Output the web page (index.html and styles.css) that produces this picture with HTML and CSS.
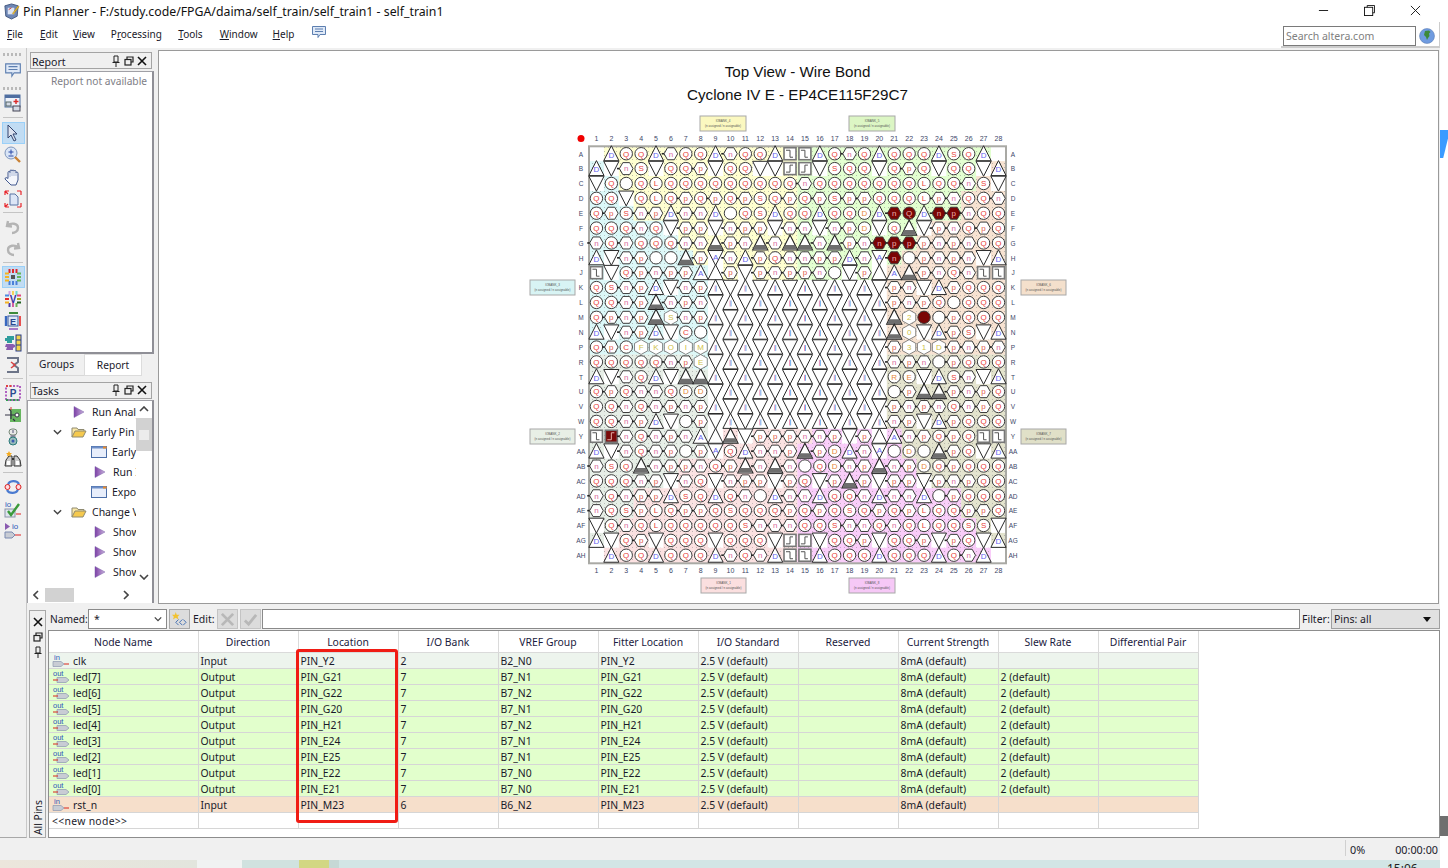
FILE: index.html
```html
<!DOCTYPE html>
<html lang="en">
<head>
<meta charset="utf-8">
<title>Pin Planner</title>
<link rel="stylesheet" href="styles.css">
</head>
<body>
<svg class="defs" width="0" height="0">
  <linearGradient id="purple" x1="0" y1="0" x2="1" y2="0"><stop offset="0" stop-color="#7c3fa6"/><stop offset="1" stop-color="#c9b3dc"/></linearGradient>
  <symbol id="play" viewBox="0 0 12 12"><path d="M1 .5 11 6 1 11.5Z" fill="url(#purple)" stroke="#7d62a8" stroke-width=".5"/></symbol>
  <symbol id="folder" viewBox="0 0 16 12"><path d="M1 11V2h5l1 1.5h6V5" fill="#fbe9a8" stroke="#8f8a70"/><path d="M1 11 4 5h11l-3 6Z" fill="#f5c94e" stroke="#8f8a70"/></symbol>
  <symbol id="win" viewBox="0 0 16 12"><rect x=".5" y=".5" width="15" height="11" fill="#e8eefb" stroke="#4b6ea8"/><rect x=".5" y=".5" width="15" height="2" fill="#6f8fc8"/><rect x="12" y=".5" width="3.5" height="2" fill="#e88a2a"/></symbol>
  <symbol id="chev" viewBox="0 0 10 6"><path d="M1 1l4 4 4-4" fill="none" stroke="#444" stroke-width="1.6"/></symbol>
  <symbol id="pin-in" viewBox="0 0 18 15"><path d="M1 8.5h8l3 2.5-3 2.5H1Z" fill="#c8ccd4" stroke="#8c98b0" stroke-width=".7"/><path d="M12 11h5" stroke="#d8261c"/></symbol>
  <symbol id="pin-out" viewBox="0 0 18 15"><path d="M5 8.500h9l3 2.500-3 2.500H5Z" fill="#c8ccd4" stroke="#8c98b0" stroke-width=".7"/><path d="M1 11h5" stroke="#d8261c"/></symbol>
  <symbol id="pin" viewBox="0 0 10 12"><path d="M3 1h4v6H3ZM1.500 7.500h7M5 8v4" fill="none" stroke="#222"/></symbol>
  <symbol id="restore" viewBox="0 0 10 10"><path d="M3 3V1h6v5H7" fill="none" stroke="#222" stroke-width="1.2"/><rect x="1" y="3.500" width="6" height="5.500" fill="none" stroke="#222" stroke-width="1.2"/></symbol>
  <symbol id="close" viewBox="0 0 10 10"><path d="M1 1l8 8M9 1 1 9" stroke="#111" stroke-width="1.6"/></symbol>
  <symbol id="bubble" viewBox="0 0 16 16"><path d="M1.500 2.500h13v8H9l-2 3v-3H1.500Z" fill="#dfe9f7" stroke="#5d7fb0"/><path d="M4 5h8M4 7.500h8" stroke="#5d7fb0"/></symbol>
</svg>

<div class="screen">
  <div class="app">
    <header class="titlebar">
      <svg class="app-ico" viewBox="0 0 18 18"><path d="M2 3 9 1l7 2-1 11-6 3-6-3Z" fill="#6d86b5" stroke="#44597f"/><path d="M5 5h7v7H5Z" fill="#dbe4f4"/><path d="M10 11 16 3l1 1-6 8Z" fill="#f2c230" stroke="#a47b16" stroke-width=".5"/><path d="M6 7l3-2" stroke="#c33"/></svg>
      <span class="title-text">Pin Planner - F:/study.code/FPGA/daima/self_train/self_train1 - self_train1</span>
      <div class="win-btns">
        <svg class="win-btn" viewBox="0 0 12 12"><path d="M1 6h10" stroke="#111"/></svg>
        <svg class="win-btn" viewBox="0 0 12 12"><path d="M3.500 2.500v-2h8v8h-2" fill="none" stroke="#111"/><rect x=".5" y="2.500" width="9" height="9" fill="none" stroke="#111"/></svg>
        <svg class="win-btn" viewBox="0 0 12 12"><path d="M1 1l10 10M11 1 1 11" stroke="#111"/></svg>
      </div>
    </header>

    <nav class="menubar">
      <span class="m-file"><u>F</u>ile</span>
      <span class="m-edit"><u>E</u>dit</span>
      <span class="m-view"><u>V</u>iew</span>
      <span class="m-proc">P<u>r</u>ocessing</span>
      <span class="m-tools"><u>T</u>ools</span>
      <span class="m-window"><u>W</u>indow</span>
      <span class="m-help"><u>H</u>elp</span>
      <svg class="m-bubble"><use href="#bubble"/></svg>
      <div class="searchgroup">
        <span class="search">Search altera.com</span>
        <svg class="globe" viewBox="0 0 16 16"><circle cx="8" cy="8" r="7.500" fill="#6f9be0" stroke="#5577aa" stroke-width=".5"/><path d="M6 3l4-.5 1.500 1.500-1.500 1.500.5 2.500-1.500 2-1 2-1-3-2-2 .5-2Z" fill="#3e8a3a"/></svg>
      </div>
    </nav>

    <div class="main">
      <aside class="toolbar">
        <i class="grip g1"></i>
        <div class="tb"><svg class="tb-i" viewBox="0 0 18 18"><use href="#bubble" width="18" height="18"/></svg></div>
        <i class="grip g2"></i>
        <div class="tb"><svg class="tb-i" viewBox="0 0 18 18"><rect x="1" y="1" width="15" height="12" fill="#eef2fa" stroke="#4f6ea0"/><rect x="1" y="1" width="15" height="3" fill="#4f6ea0"/><path d="M12 5v5M9.500 7.500h5" stroke="#d92a2a" stroke-width="1.400"/><rect x="2" y="8" width="5" height="4" fill="#d4dae6" stroke="#566"/><rect x="9" y="12" width="7" height="5" fill="#d4dae6" stroke="#445"/></svg></div>
        <i class="sep s1"></i>
        <div class="tb on"><svg class="tb-i" viewBox="0 0 18 18"><path d="M4 1v13l3-3 3 6 2-1-3-6h4Z" fill="#dde3ef" stroke="#33456f"/></svg></div>
        <div class="tb"><svg class="tb-i" viewBox="0 0 18 18"><circle cx="7" cy="7" r="6" fill="#d9e5f6" stroke="#7f96bb"/><path d="M7 3.500v5M4.500 6h5M4.500 10h5" stroke="#2848a8"/><path d="M11 11l5 5" stroke="#c98236" stroke-width="2.400"/></svg></div>
        <div class="tb"><svg class="tb-i" viewBox="0 0 18 18"><path d="M4 9V4.500a1 1 0 0 1 2 0V3a1 1 0 0 1 2 0v0a1 1 0 0 1 2 .2 1 1 0 0 1 2 .6V5a1 1 0 0 1 2 .4V12l-2 5H7L1 11c0-1.500 1.500-2 3-.5Z" fill="#f4f6fb" stroke="#42598f"/><path d="M6 4v5M8 3v5M10 3.500V8M12 4v4" stroke="#8ea2c8" stroke-width=".7"/></svg></div>
        <div class="tb"><svg class="tb-i" viewBox="0 0 18 18"><path d="M6 4h5l3 3v8H6Z" fill="#dde6f6" stroke="#5a74a4"/><path d="M1 1h4M1 1v4M1 1l3 3M17 1h-4M17 1v4M1 17h4M1 17v-4M1 17l3-3M17 17h-4M17 17v-4" stroke="#e8252b" fill="none" stroke-width="1.200"/></svg></div>
        <i class="sep"></i>
        <div class="tb"><svg class="tb-i" viewBox="0 0 18 18"><path d="M4 3 3 8l5 .5M3.500 7.500C7 4.500 14 5 14 10c0 3-3 5-6 5" fill="none" stroke="#b4b4b4" stroke-width="2.400"/></svg></div>
        <div class="tb"><svg class="tb-i" viewBox="0 0 18 18"><path d="M14 3l1 5-5 .5M14.500 7.500C11 4.500 4 5 4 10c0 3 3 5 6 5" fill="none" stroke="#b4b4b4" stroke-width="2.400"/></svg></div>
        <i class="sep"></i>
        <div class="tb on"><svg class="tb-i" viewBox="0 0 18 18"><rect x="7" y="7" width="4" height="4" fill="#555"/><path d="M5.500 1v4M9 1v4M12.500 1v4" stroke="#e0282c" stroke-width="2"/><path d="M5.500 13v4M9 13v4M12.500 13v4" stroke="#4a80d8" stroke-width="2"/><path d="M1 5.500h4M1 9h4M1 12.500h4" stroke="#f4b324" stroke-width="2"/><path d="M13 5.500h4M13 9h4M13 12.500h4" stroke="#66b45a" stroke-width="2"/></svg></div>
        <div class="tb"><svg class="tb-i" viewBox="0 0 18 18"><path d="M5.500 1v4" stroke="#d49fe0" stroke-width="2"/><path d="M9 1v4" stroke="#f4d15a" stroke-width="2"/><path d="M12.500 1v4" stroke="#70d8d0" stroke-width="2"/><path d="M5.500 13v4" stroke="#4a3aa8" stroke-width="2"/><path d="M9 13v4" stroke="#d060a0" stroke-width="2"/><path d="M12.500 13v4" stroke="#6ab45a" stroke-width="2"/><path d="M1 5.500h4" stroke="#4a88e0" stroke-width="2"/><path d="M1 9h4" stroke="#e0282c" stroke-width="2"/><path d="M1 12.500h4" stroke="#f4b324" stroke-width="2"/><path d="M13 5.500h4" stroke="#e04880" stroke-width="2"/><path d="M13 9h4" stroke="#a0a020" stroke-width="2"/><path d="M13 12.500h4" stroke="#206020" stroke-width="2"/><text x="9" y="13" class="tb-t v">V</text></svg></div>
        <div class="tb"><svg class="tb-i" viewBox="0 0 18 18"><path d="M5 1h9" stroke="#3c8a3c" stroke-width="2"/><path d="M5 17h9" stroke="#a878c8" stroke-width="2"/><path d="M2 4v10" stroke="#3868c0" stroke-width="2.400"/><path d="M16 4v10" stroke="#e85050" stroke-width="2"/><rect x="4" y="4" width="10" height="10" fill="#dde6f6" stroke="#3a5a9a"/><text x="9" y="12.500" class="tb-t e">E</text></svg></div>
        <div class="tb"><svg class="tb-i" viewBox="0 0 18 18"><rect x="12" y="1" width="5" height="16" fill="#f2d34c" stroke="#243a8a"/><path d="M12 6h5M12 11h5" stroke="#243a8a"/><path d="M3 2h7v4H8v3H3V7H1V4h2Z" fill="#2f9d9d"/><path d="M2 10h7l2 1v2l-2 1v2H2l1-3H1Z" fill="#8a5bb0"/></svg></div>
        <div class="tb"><svg class="tb-i" viewBox="0 0 18 18"><path d="M3 2h11v4l-4 3 4 3v4H3" fill="none" stroke="#6c7488" stroke-width="2"/><path d="M7 6l4 3-4 3" fill="none" stroke="#d94040" stroke-width="1.500"/></svg></div>
        <i class="sep"></i>
        <div class="tb"><svg class="tb-i" viewBox="0 0 18 18"><path d="M2 2h14v14H2Z" fill="none" stroke="#b060c0" stroke-width="2" stroke-dasharray="2 1.500"/><path d="M2 2h7" stroke="#e04040" stroke-width="2" stroke-dasharray="2 1.500"/><path d="M2 16h14" stroke="#30a050" stroke-width="2" stroke-dasharray="2 1.500"/><text x="9" y="13" class="tb-t p">P</text></svg></div>
        <div class="tb"><svg class="tb-i" viewBox="0 0 18 18"><rect x="6" y="3" width="11" height="13" fill="#67b65f"/><path d="M1 9h13M7 5v8M5 3l2 2M9 13l2 2" stroke="#334" stroke-width="1.200" fill="none"/><path d="M7 1v3" stroke="#d33"/><circle cx="13" cy="9" r="2" fill="#fff" stroke="#334"/></svg></div>
        <div class="tb"><svg class="tb-i" viewBox="0 0 18 18"><rect x="5" y="1" width="8" height="6" rx="3" fill="#e8e8e8" stroke="#7a8a7a"/><path d="M9 2v3" stroke="#557"/><rect x="6.500" y="7" width="5" height="2" fill="#889"/><circle cx="9" cy="13" r="4" fill="#9bb" stroke="#2a7a7a"/><circle cx="9" cy="13" r="1.500" fill="#3a5ab0"/></svg></div>
        <div class="tb"><svg class="tb-i" viewBox="0 0 18 18"><path d="M2 10l3-4h3v10H1ZM16 10l-3-4h-3v10h7Z" fill="#ccc" stroke="#333"/><path d="M8 9h2" stroke="#333" stroke-width="2"/><path d="M5 1l1 2 2 0-1.500 1.500L7 6.500 5 5.500 3 6.500l.5-2L2 3h2Z" fill="#f3a91c"/><path d="M3 11h3v4H3ZM12 11h3v4h-3Z" fill="#fff"/></svg></div>
        <i class="sep"></i>
        <div class="tb"><svg class="tb-i" viewBox="0 0 18 18"><path d="M4 7c1-5 9-5 11-1M14 11c-1 5-9 5-11 1" fill="none" stroke="#4a7ad0" stroke-width="2.200"/><circle cx="3.500" cy="9" r="2.500" fill="#ffdce0" stroke="#d22"/><circle cx="14.500" cy="9" r="2.500" fill="#ffdce0" stroke="#d22"/></svg></div>
        <div class="tb"><svg class="tb-i" viewBox="0 0 18 18"><text x="1" y="7" class="tb-t io">io</text><rect x="1" y="9" width="10" height="8" fill="#dfe4ee" stroke="#8a94a8"/><path d="M4 11l3 4 8-11" fill="none" stroke="#3a9a3a" stroke-width="2.400"/><path d="M12 14h5" stroke="#d22"/></svg></div>
        <div class="tb"><svg class="tb-i" viewBox="0 0 18 18"><path d="M1 1l5 3.500L1 8Z" fill="#8a5bb0"/><text x="8" y="7" class="tb-t io">io</text><path d="M1 10h7l3 3-3 3H1Z" fill="#c8ccd4" stroke="#7a8ab0"/><path d="M11 13h6" stroke="#d22"/></svg></div>
      </aside>

      <div class="content">
        <div class="upper">
          <div class="dock">
            <div class="pane-head report-head"><span>Report</span><span class="head-btns"><svg class="hb"><use href="#pin"/></svg><svg class="hb"><use href="#restore"/></svg><svg class="hb"><use href="#close"/></svg></span></div>
            <div class="report-body">Report not available</div>
            <div class="tabs"><span class="tab">Groups</span><span class="tab active">Report</span></div>
            <div class="pane-head tasks-head"><span>Tasks</span><span class="head-btns"><svg class="hb"><use href="#pin"/></svg><svg class="hb"><use href="#restore"/></svg><svg class="hb"><use href="#close"/></svg></span></div>
            <div class="tasks-body">
              <div class="tree-wrap">
                <div class="tree">
                  <div class="row l1"><svg class="i-play"><use href="#play"/></svg><span>Run Analysis &amp; Synthesis</span></div>
                  <div class="row l0"><svg class="i-chev"><use href="#chev"/></svg><svg class="i-folder"><use href="#folder"/></svg><span>Early Pin Planning</span></div>
                  <div class="row l2"><svg class="i-win"><use href="#win"/></svg><span>Early Pin Planner</span></div>
                  <div class="row l3"><svg class="i-play"><use href="#play"/></svg><span>Run I/O Assignment Analysis</span></div>
                  <div class="row l2"><svg class="i-win"><use href="#win"/></svg><span>Export Pin Assignments</span></div>
                  <div class="row l0"><svg class="i-chev"><use href="#chev"/></svg><svg class="i-folder"><use href="#folder"/></svg><span>Change View</span></div>
                  <div class="row l3"><svg class="i-play"><use href="#play"/></svg><span>Show Package Top</span></div>
                  <div class="row l3"><svg class="i-play"><use href="#play"/></svg><span>Show Package Bottom</span></div>
                  <div class="row l3"><svg class="i-play"><use href="#play"/></svg><span>Show Pad View</span></div>
                  <div class="row l0"><svg class="i-chev"><use href="#chev"/></svg><svg class="i-folder"><use href="#folder"/></svg><span>Highlight Pins</span></div>
                </div>
                <div class="vbar">
                  <svg class="arrow up" viewBox="0 0 10 6"><path d="M1 5l4-4 4 4" fill="none" stroke="#444" stroke-width="1.600"/></svg>
                  <div class="vthumb"><i></i></div>
                  <svg class="arrow down" viewBox="0 0 10 6"><path d="M1 1l4 4 4-4" fill="none" stroke="#444" stroke-width="1.600"/></svg>
                </div>
              </div>
              <div class="hbar">
                <svg class="arrow-h" viewBox="0 0 6 10"><path d="M5 1 1 5l4 4" fill="none" stroke="#444" stroke-width="1.600"/></svg>
                <div class="hthumb"></div>
                <svg class="arrow-h right" viewBox="0 0 6 10"><path d="M1 1l4 4-4 4" fill="none" stroke="#444" stroke-width="1.600"/></svg>
              </div>
            </div>
          </div>

          <section class="canvas">
            <div class="canvas-title">Top View - Wire Bond</div>
            <div class="canvas-title">Cyclone IV E - EP4CE115F29C7</div>
            <svg id="pkg" class="pkg" viewBox="525 115 545 480"></svg>
          </section>
        </div>

        <div class="lower">
          <div class="strip">
            <svg class="sb"><use href="#close"/></svg>
            <svg class="sb"><use href="#restore"/></svg>
            <svg class="sb"><use href="#pin"/></svg>
            <span class="strip-label">All Pins</span>
          </div>
          <div class="editor">
            <div class="controls">
              <span class="lb named">Named:</span>
              <div class="field name-field"><span>*</span><svg class="combo-chev"><use href="#chev"/></svg></div>
              <div class="btn"><svg class="btn-i" viewBox="0 0 18 16"><path d="M5 0l1 3 3 0-2 2 1 3-3-2-3 2 1-3-2-2 3 0Z" fill="#f2c230"/><path d="M8 8l-3 3 3 3M12 8l-3 3 3 3M13 8l3 3-3 3" fill="none" stroke="#3e6cb0"/></svg></div>
              <span class="lb edit">Edit:</span>
              <div class="btn dis"><svg class="btn-i" viewBox="0 0 18 16"><path d="M3 2l12 12M15 2 3 14" stroke="#b8b8b8" stroke-width="3"/></svg></div>
              <div class="btn dis"><svg class="btn-i" viewBox="0 0 18 16"><path d="M3 9l4 4 8-10" fill="none" stroke="#b8b8b8" stroke-width="3"/></svg></div>
              <div class="field value-field"></div>
              <span class="lb filter">Filter:</span>
              <div class="select"><span>Pins: all</span><i class="tri"></i></div>
            </div>
            <div class="table-panel">
              <table class="pins">
                <colgroup><col class="c-name"><col class="c-w"><col class="c-w"><col class="c-w"><col class="c-w"><col class="c-w"><col class="c-w"><col class="c-w"><col class="c-w"><col class="c-w"><col class="c-w"></colgroup>
                <thead><tr><th>Node Name</th><th>Direction</th><th>Location</th><th>I/O Bank</th><th>VREF Group</th><th>Fitter Location</th><th>I/O Standard</th><th>Reserved</th><th>Current Strength</th><th>Slew Rate</th><th>Differential Pair</th></tr></thead>
                <tbody>
                  <tr class="r-clk"><td class="nm"><svg class="pinico" viewBox="0 0 18 15"><text x="2" y="6.500" class="io-t">in</text><use href="#pin-in"/></svg>clk</td><td>Input</td><td>PIN_Y2</td><td>2</td><td>B2_N0</td><td>PIN_Y2</td><td>2.5 V (default)</td><td></td><td>8mA (default)</td><td></td><td></td></tr>
                  <tr class="r-led"><td class="nm"><svg class="pinico" viewBox="0 0 18 15"><text x="1" y="6.500" class="io-t">out</text><use href="#pin-out"/></svg>led[7]</td><td>Output</td><td>PIN_G21</td><td>7</td><td>B7_N1</td><td>PIN_G21</td><td>2.5 V (default)</td><td></td><td>8mA (default)</td><td>2 (default)</td><td></td></tr>
                  <tr class="r-led"><td class="nm"><svg class="pinico" viewBox="0 0 18 15"><text x="1" y="6.500" class="io-t">out</text><use href="#pin-out"/></svg>led[6]</td><td>Output</td><td>PIN_G22</td><td>7</td><td>B7_N2</td><td>PIN_G22</td><td>2.5 V (default)</td><td></td><td>8mA (default)</td><td>2 (default)</td><td></td></tr>
                  <tr class="r-led"><td class="nm"><svg class="pinico" viewBox="0 0 18 15"><text x="1" y="6.500" class="io-t">out</text><use href="#pin-out"/></svg>led[5]</td><td>Output</td><td>PIN_G20</td><td>7</td><td>B7_N1</td><td>PIN_G20</td><td>2.5 V (default)</td><td></td><td>8mA (default)</td><td>2 (default)</td><td></td></tr>
                  <tr class="r-led"><td class="nm"><svg class="pinico" viewBox="0 0 18 15"><text x="1" y="6.500" class="io-t">out</text><use href="#pin-out"/></svg>led[4]</td><td>Output</td><td>PIN_H21</td><td>7</td><td>B7_N2</td><td>PIN_H21</td><td>2.5 V (default)</td><td></td><td>8mA (default)</td><td>2 (default)</td><td></td></tr>
                  <tr class="r-led"><td class="nm"><svg class="pinico" viewBox="0 0 18 15"><text x="1" y="6.500" class="io-t">out</text><use href="#pin-out"/></svg>led[3]</td><td>Output</td><td>PIN_E24</td><td>7</td><td>B7_N1</td><td>PIN_E24</td><td>2.5 V (default)</td><td></td><td>8mA (default)</td><td>2 (default)</td><td></td></tr>
                  <tr class="r-led"><td class="nm"><svg class="pinico" viewBox="0 0 18 15"><text x="1" y="6.500" class="io-t">out</text><use href="#pin-out"/></svg>led[2]</td><td>Output</td><td>PIN_E25</td><td>7</td><td>B7_N1</td><td>PIN_E25</td><td>2.5 V (default)</td><td></td><td>8mA (default)</td><td>2 (default)</td><td></td></tr>
                  <tr class="r-led"><td class="nm"><svg class="pinico" viewBox="0 0 18 15"><text x="1" y="6.500" class="io-t">out</text><use href="#pin-out"/></svg>led[1]</td><td>Output</td><td>PIN_E22</td><td>7</td><td>B7_N0</td><td>PIN_E22</td><td>2.5 V (default)</td><td></td><td>8mA (default)</td><td>2 (default)</td><td></td></tr>
                  <tr class="r-led"><td class="nm"><svg class="pinico" viewBox="0 0 18 15"><text x="1" y="6.500" class="io-t">out</text><use href="#pin-out"/></svg>led[0]</td><td>Output</td><td>PIN_E21</td><td>7</td><td>B7_N0</td><td>PIN_E21</td><td>2.5 V (default)</td><td></td><td>8mA (default)</td><td>2 (default)</td><td></td></tr>
                  <tr class="r-rst"><td class="nm"><svg class="pinico" viewBox="0 0 18 15"><text x="2" y="6.500" class="io-t">in</text><use href="#pin-in"/></svg>rst_n</td><td>Input</td><td>PIN_M23</td><td>6</td><td>B6_N2</td><td>PIN_M23</td><td>2.5 V (default)</td><td></td><td>8mA (default)</td><td></td><td></td></tr>
                  <tr class="r-new"><td class="nw">&lt;&lt;new node&gt;&gt;</td><td></td><td></td><td></td><td></td><td></td><td></td><td></td><td></td><td></td><td></td></tr>
                </tbody>
              </table>
              <div class="callout"></div>
            </div>
          </div>
        </div>
      </div>
    </div>

    <footer class="status">
      <span class="pct">0%</span>
      <span class="elapsed">00:00:00</span>
    </footer>
  </div>
  <div class="edge"><i class="edge-blue"></i><i class="edge-grey"></i></div>
</div>
<div class="desktop">
  <i class="d1"></i><i class="d2"></i><i class="d3"></i><i class="d4"></i><i class="d5"></i><i class="d6"></i>
  <span class="clock">15:06</span>
</div>
<script src="pins.js"></script>
</body>
</html>
```

FILE: styles.css
```css
* { box-sizing: border-box; }
html, body { margin: 0; padding: 0; width: 1448px; height: 868px; overflow: hidden; background: #fff; }
body { font-family: "Noto Sans", "Liberation Sans", sans-serif; font-size: 10.5px; color: #1a1a2a; }
.defs { position: absolute; }
.io-t { font: 7.5px "Liberation Sans", sans-serif; fill: #2c55b8; }

.screen { display: flex; height: 860px; }
.app { width: 1440px; display: flex; flex-direction: column; background: #f0f0f0; }
.edge { width: 8px; background: #fff; display: flex; flex-direction: column; }
.edge-blue { display: block; margin-top: 130px; height: 28px; background: #3b9bff; clip-path: polygon(0 0,100% 0,100% 30%,40% 100%,0 100%); }
.edge-grey { display: block; margin-top: 658px; height: 20px; background: #6f6f6f; }

.titlebar { height: 22px; background: #fff; display: flex; align-items: center; padding-left: 3px; }
.app-ico { width: 17px; height: 17px; margin-right: 3px; }
.title-text { font-size: 12.3px; color: #111; white-space: nowrap; }
.win-btns { margin-left: auto; display: flex; gap: 35px; margin-right: 19px; margin-top: -2px; }
.win-btn { width: 11px; height: 11px; }

.menubar { height: 26px; background: #fff; display: flex; align-items: center; padding-left: 7px; padding-bottom: 3px; font-size: 10px; }
.menubar u { text-decoration: underline; }
.m-edit { margin-left: 17px; }
.m-view { margin-left: 15px; }
.m-proc { margin-left: 16px; }
.m-tools { margin-left: 16.5px; }
.m-window { margin-left: 17px; }
.m-help { margin-left: 15px; }
.m-bubble { width: 16px; height: 16px; margin-left: 17px; margin-top: -3px; }
.searchgroup { margin-left: auto; align-self: flex-start; margin-bottom: -3px; display: flex; align-items: center; width: 159px; height: 26px; padding: 3px 0 0 2px; background: #fff; border-right: 1px solid #ccc; border-bottom: 2px solid #ccc; }
.search { width: 133px; height: 20px; background: #fff; border: 1px solid #7a7a7a; padding-left: 2px; color: #808080; line-height: 18px; font-size: 10.5px; white-space: nowrap; }
.globe { width: 16px; height: 16px; margin-left: 3px; }

.main { flex: none; height: 790px; display: flex; }
.toolbar { width: 27px; border-right: 1px solid #c8c8c8; border-bottom: 1px solid #a8a8a8; display: flex; flex-direction: column; align-items: center; }
.grip { display: block; width: 20px; height: 3px; background: repeating-linear-gradient(90deg, #b9b9b9 0 2px, transparent 2px 4px); }
.g1 { margin-top: 5px; margin-bottom: 3px; }
.g2 { margin-top: 6px; margin-bottom: 2px; }
.sep { display: block; width: 20px; height: 1px; background: #c4c4c4; margin: 2px 0 3px; flex: none; }
.s1 { margin: 3px 0 4px; }
.tb { flex: none; width: 23px; height: 22px; display: flex; align-items: center; justify-content: center; }
.tb.on { background: #c1dcf3; border: 1px solid #9ad0f8; }
.tb-i { width: 18px; height: 18px; }
.tb-t { font-family: "Liberation Sans", sans-serif; font-weight: 700; text-anchor: middle; }
.tb-t.v { font-size: 10px; fill: #3330a0; }
.tb-t.e { font-size: 9px; fill: #2a4a90; }
.tb-t.p { font-size: 10px; fill: #2a4a90; }
.tb-t.io { font-size: 8px; fill: #2c55b8; font-weight: 400; text-anchor: start; }

.content { flex: 1; display: flex; flex-direction: column; min-width: 0; }
.upper { height: 556px; display: flex; }
.dock { width: 127px; display: flex; flex-direction: column; }
.pane-head { margin: 4px 2px 2px 3px; height: 17px; border: 1px solid #a4a4a4; display: flex; align-items: center; padding-left: 1px; padding-top: 1px; font-size: 10.6px; }
.report-head { padding-top: 2px; }
.tasks-head { margin: 6px 2px 1px 3px; }
.head-btns { margin-left: auto; display: flex; gap: 3px; padding-right: 4px; margin-top: -2px; }
.hb { width: 10px; height: 12px; }
.report-body { height: 283px; background: #fff; border-style: solid; border-width: 1px 2px 2px 1px; border-color: #a0a0a6 #8f8f96 #8f8f96 #a0a0a6; padding: 2px 5px 0 0; text-align: right; color: #7e7e86; font-size: 10.2px; }
.tabs { height: 22px; display: flex; align-items: stretch; padding-left: 2px; font-size: 10.2px; }
.tab { width: 55px; text-align: center; line-height: 20px; border-bottom: 1px solid #d8d8d8; }
.tab.active { background: #fff; border: 1px solid #dcdcdc; width: 58px; line-height: 21px; }

.tasks-body { height: 203px; background: #fff; border: 1px solid #a0a0a6; border-right: 2px solid #8f8f96; border-bottom: 0; display: flex; flex-direction: column; }
.tree-wrap { flex: 1; display: flex; min-height: 0; }
.tree { width: 109px; overflow: hidden; padding-top: 1px; }
.row { height: 20px; display: flex; align-items: center; white-space: nowrap; font-size: 10.5px; flex: none; }
.l1 { padding-left: 45px; }
.l0 { padding-left: 25px; }
.l2 { padding-left: 63px; }
.l3 { padding-left: 66px; }
.i-play { width: 12px; height: 12px; margin-right: 7px; flex: none; }
.i-chev { width: 9px; height: 6px; margin-right: 9px; flex: none; }
.i-folder { width: 16px; height: 12px; margin-right: 5px; flex: none; }
.i-win { width: 16px; height: 12px; margin-right: 5px; flex: none; }
.vbar { width: 16px; display: flex; flex-direction: column; align-items: center; background: #fff; padding-top: 5px; }
.arrow { width: 10px; height: 6px; flex: none; }
.arrow.down { margin-top: auto; margin-bottom: 7px; }
.vthumb { width: 16px; height: 33px; margin-top: 6px; background: #d2d2d2; display: flex; align-items: center; justify-content: center; }
.vthumb i { display: block; width: 10px; height: 10px; background: #ececec; }
.hbar { height: 16px; display: flex; align-items: center; background: #fff; padding: 0 0 0 5px; flex: none; }
.arrow-h { width: 6px; height: 10px; flex: none; }
.hthumb { width: 29px; height: 14px; margin-left: 6px; background: #d2d2d2; }
.arrow-h.right { margin-left: 49px; }

.canvas { width: 1281px; margin: 2px 0 0 4px; background: #fff; border: 1px solid #9a9a9a; display: flex; flex-direction: column; align-items: center; padding-top: 9px; height: 554px; }
.canvas-title { height: 23px; line-height: 23px; font-family: "Liberation Sans", sans-serif; font-size: 15.2px; color: #111; white-space: nowrap; margin-left: -2px; }
.pkg { width: 545px; height: 480px; margin: 8px 0 0 -2px; flex: none; }

.lower { margin: 4px 0 0 2px; height: 230px; display: flex; }
.strip { width: 17px; height: 228px; margin-top: 2px; border: 1px solid #a8a8a8; background: #f0f0f0; display: flex; flex-direction: column; align-items: center; padding-top: 5px; gap: 3px; }
.sb { width: 10px; height: 12px; flex: none; }
.strip-label { margin-top: auto; margin-bottom: 2px; writing-mode: vertical-rl; transform: rotate(180deg); font-size: 10.4px; line-height: 14px; }

.editor { margin-left: 2px; width: 1392px; display: flex; flex-direction: column; }
.controls { height: 22px; display: flex; align-items: center; flex: none; }
.lb { white-space: nowrap; }
.named { margin-left: 2px; width: 38px; font-size: 10.2px; }
.field { background: #fff; border: 1px solid #8a8a8a; height: 20px; }
.name-field { width: 79px; display: flex; align-items: center; padding-left: 5px; justify-content: space-between; }
.combo-chev { width: 8px; height: 6px; margin-right: 4px; }
.btn { height: 20px; width: 21px; background: #dcdcdc; border: 1px solid #a8a8a8; display: flex; align-items: center; justify-content: center; flex: none; }
.btn.dis { background: #dcdcdc; border-color: #c4c4c4; }
.controls .btn { margin-left: 2px; }
.btn-i { width: 17px; height: 15px; }
.edit { margin-left: 3px; width: 22px; }
.value-field { width: 1038px; margin-left: 1px; }
.filter { margin-left: 2px; width: 29px; }
.select { width: 109px; height: 20px; background: #e1e1e1; border: 1px solid #a0a0a0; display: flex; align-items: center; padding-left: 2px; justify-content: space-between; }
.tri { width: 0; height: 0; border: 4px solid transparent; border-top: 5px solid #111; border-bottom: 0; margin-right: 8px; }

.table-panel { position: relative; height: 208px; background: #fff; border: 1px solid #8d8d8d; }
.pins { border-collapse: collapse; table-layout: fixed; width: 1149px; font-size: 10.4px; }
.c-name { width: 149px; }
.c-w { width: 100px; }
.pins th { height: 21px; font-weight: 400; border-right: 1px solid #dadada; border-bottom: 1px solid #dadada; padding: 2px 0 0; text-align: center; color: #1a1a40; white-space: nowrap; }
.pins td { height: 16px; padding: 1px 0 0 2px; border-right: 1px solid #d6d6d6; border-bottom: 1px solid #d6d6d6; white-space: nowrap; line-height: 14px; overflow: hidden; }
.r-clk td { background: #edf4ed; }
.r-led td { background: #e2ffcc; }
.r-rst td { background: #f6dfcb; }
.r-new td { background: #fff; }
.pins td.nm { padding-left: 3px; }
.pinico { width: 18px; height: 15px; vertical-align: top; margin: -1px 3px 0 0; overflow: visible; }
.pins td.nw { letter-spacing: .3px; padding-left: 3px; }
.callout { position: absolute; left: 247px; top: 18px; width: 102px; height: 174px; border: 3px solid #f01c14; border-radius: 3px; pointer-events: none; }

.status { height: 22px; flex: none; display: flex; align-items: center; position: relative; font-size: 10.8px; }
.pct { margin-left: 1350px; }
.elapsed { margin-left: 30px; white-space: nowrap; }
.status::before { content: ""; position: absolute; left: 1345px; top: 2px; height: 16px; width: 1px; background: #d0d0d0; }

.desktop { height: 8px; display: flex; position: relative; overflow: hidden; }
.desktop i { display: block; height: 8px; }
.d1 { width: 197px; background: linear-gradient(90deg, #ece6dc, #e2e5dd); }
.d2 { width: 45px; background: #f0f3f2; }
.d3 { width: 57px; background: #d0e2df; }
.d4 { width: 30px; background: #d2d783; }
.d5 { width: 10px; background: #c6d8d5; }
.d6 { width: 1101px; background: #d2e5e5; }
.clock { position: absolute; left: 1387px; top: 2px; font-size: 12px; line-height: 14px; color: #222; }
```

FILE: pins.js
```js
(function () {
  var rows = ['A','B','C','D','E','F','G','H','J','K','L','M','N','P','R','T','U','V','W','Y','AA','AB','AC','AD','AE','AF','AG','AH'];
  var M = 'IvIvIvIvIvIv', W = 'vIvIvIvIvIvI';
  var pins = [
    '_^QQ^nQQ^nQQ^[[^QnQ^QQQ^SQ^_',
    '^vnSvQQpvQQvv]]vSQQvQpQvQQv^',
    'vQoQLQQQQQQQQQnQQQQQQQLQQnSv',
    'QQvQLQpQpQpSQpQpSppQQQLpnQQn',
    'QpSnp^nn^oQS^QQ^QQD^NR^NPnQQ',
    'QQQnQvppvnppvnnvnpDvQ#vpnQpQ',
    'nQnQQQnn#pn#n##n#pnNPPpnpnQQ',
    '^vnpoo#pan^pQnnpp^naNopnpnv^',
    '[vQpnppAupvpnppnovpuA#pnQn[[',
    'QSnp^vnp' + M + 'pnv^pQQQ',
    'QQnp#npn' + W + 'pnpQoQQQ',
    'Qpnp#snp' + M + '#2@opQQQ',
    '^vnp^vCo' + W + '#0v^pSv^',
    'QpCfkghm' + M + 'p31dpnpn',
    'QQQQQnpe' + W + 'npnopQQQ',
    '^vnQ^v##' + M + '()v^Snv^',
    'QpQnnQDD' + W + 'op##pnpQ',
    'QQnQnpnp' + M + 'pnpnQnpQ',
    'QQnp^vop' + W + 'npv^pQQQ',
    '[ZnQnpnAu#vpppnnpvpuAnpQpQ[[',
    '^vnQnpopaQ^nnp#pD^naoDo#pQv^',
    'nSQ#nppnQp#n#noQDnp#npDQpQQQ',
    'QQQnpvnQvnppvpQvp#pvppvpnpQQ',
    'nQnpp^SQ^Qno^nn^QQn^nn^opQQQ',
    'nQSpLQppQSQQQpQpQSQpQpLQQppQ',
    'vQnQLQQQQQSnnnQQSnnQnQLQQSSv',
    '^vQpvQQQvQQQv]]vQQpvQQpvpQv^',
    '_^QQ^QQQ^nQn^[[^QQQ^QQQ^Qn^_'
  ];
  var banks = [
    'w1y13g13w1','c2y12g13o1','c2y12g12o2','c3y11g11o3','c3y11g11o3','c6y8g9o5','c6y8g8o6','c7y7g7o7','c8y6g6o8',
    'c8w12o8','c8w12o8','c8w12o8','c8w12o8','c8w12o8','e7c1w12k8','e8w12k8','e8w12k8','e8w12k8','e8w12k8',
    'e8i7m6k7','e8i6m7k7','e6i8m8k6','e6i8m9k5','e3i11m11k3','e3i11m11k3','e2i12m12k2','e1i13m13k1','w1i13m13w1'
  ];
  var colors = { w: '#ffffff', y: '#ffffcf', g: '#e2ffcf', o: '#f7e2d1', c: '#dcf8f8', e: '#e6eee6', i: '#fbe1e1', m: '#f9ccf9', k: '#e3e3cd' };
  var P = 14.89, Q = 14.87, X0 = 589, Y0 = 147.3;
  var yellow = { s: 'S', f: 'F', k: 'K', g: 'O', h: 'I', m: 'M', e: 'E', d: 'D', '0': '0', '1': '1', '2': '2', '3': '3' };

  function cx(c) { return +(X0 + P * c + P / 2).toFixed(2); }
  function cy(r) { return +(Y0 + Q * r + Q / 2).toFixed(2); }
  function t(x, y, s, f, sz) {
    return '<text x="' + x + '" y="' + (y + 2.8) + '" font-size="' + (sz || 8) + '" fill="' + f + '" text-anchor="middle" font-family="Liberation Sans, sans-serif">' + s + '</text>';
  }
  function circle(x, y, fill) {
    return '<circle cx="' + x + '" cy="' + y + '" r="6.2" fill="' + (fill || '#fff') + '" stroke="#3c3c3c" stroke-width="1"/>';
  }
  function hex(x, y, fill) {
    var p = [[-6.8,0],[-3.4,-6],[3.4,-6],[6.8,0],[3.4,6],[-3.4,6]].map(function (a) { return (x + a[0]) + ',' + (y + a[1]); }).join(' ');
    return '<path d="M' + (x - 9.2) + ' ' + y + 'h3" stroke="#222" stroke-width="1.6"/><polygon points="' + p + '" fill="' + (fill || '#fff') + '" stroke="#3c3c3c" stroke-width="1"/>';
  }
  function dia(x, y) {
    var p = [[0,-7.4],[6.6,-3.7],[6.6,3.7],[0,7.4],[-6.6,3.7],[-6.6,-3.7]].map(function (a) { return (x + a[0]) + ',' + (y + a[1]); }).join(' ');
    return '<polygon points="' + p + '" fill="#fff" stroke="#555" stroke-width=".7"/>';
  }
  function up(x, y, extra) {
    return '<path d="M' + x + ' ' + (y - 8) + 'L' + (x + 7.6) + ' ' + (y + 7) + 'H' + (x - 7.6) + 'Z" fill="#fff" stroke="#2a2a2a" stroke-width="1"/>' + (extra || '');
  }
  function down(x, y, extra) {
    return '<path d="M' + (x - 7.6) + ' ' + (y - 7.3) + 'H' + (x + 7.6) + 'L' + x + ' ' + (y + 7.6) + 'Z" fill="#fff" stroke="#2a2a2a" stroke-width="1"/>' + (extra || '');
  }
  function bar(x, y) {
    return '<rect x="' + (x - .9) + '" y="' + (y - 3) + '" width="1" height="6" fill="#f090b8"/><rect x="' + (x + .1) + '" y="' + (y - 3) + '" width="1" height="6" fill="#70b0f0"/>';
  }
  function grey(x, y) {
    return '<path d="M' + x + ' ' + (y - 8) + 'L' + (x + 7.6) + ' ' + (y + 7) + 'H' + (x - 7.6) + 'Z" fill="#fff" stroke="#222" stroke-width="1.1"/>' +
      '<path d="M' + (x - 4.9) + ' ' + (y + 2) + 'H' + (x + 4.9) + 'L' + (x + 7.2) + ' ' + (y + 6.6) + 'H' + (x - 7.2) + 'Z" fill="#6e6e6e"/>';
  }
  function square(x, y, kind) {
    var d = kind === 1 ? 'M' + (x - 4) + ' ' + (y - 3.5) + 'h4v7h3' : 'M' + (x - 4) + ' ' + (y + 3.5) + 'h4v-7h3';
    return '<rect x="' + (x - 6) + '" y="' + (y - 6) + '" width="12" height="12" fill="#fff" stroke="#777" stroke-width="1.6"/><path d="' + d + '" fill="none" stroke="#555"/>';
  }

  var s = '<defs><pattern id="dots" width="4" height="4" patternUnits="userSpaceOnUse"><rect width="1" height="1" fill="#8c8c8c" opacity=".55"/></pattern></defs>';
  var i, r, c;

  /* bank background cells */
  for (r = 0; r < 28; r++) {
    var runs = banks[r].match(/[a-z]\d+/g), col = 0;
    for (i = 0; i < runs.length; i++) {
      var k = runs[i][0], n = +runs[i].slice(1);
      for (var j = 0; j < n; j++) {
        var ch = pins[r][col], isWhite = k === 'w' || ch === 'v' || ch === 'u' || ch === 'a';
        var rx = (X0 + P * col).toFixed(2), ry = (Y0 + Q * r).toFixed(2);
        s += '<rect x="' + rx + '" y="' + ry + '" width="15.2" height="15.2" fill="' + (isWhite ? '#fff' : colors[k]) + '"/>';
        if (!isWhite) s += '<rect x="' + rx + '" y="' + ry + '" width="15.2" height="15.2" fill="url(#dots)"/>';
        col++;
      }
    }
  }
  s += '<rect x="589" y="147.300" width="417" height="417" fill="none" stroke="#a9a9a4" stroke-width="2"/>';

  /* column and row headings */
  s += '<circle cx="581" cy="139.500" r="3.500" fill="#f00000"/>';
  for (i = 0; i < 28; i++) {
    s += t(cx(i), 139.5, i + 1, '#3c4668', 7);
    s += t(cx(i), 571.3, i + 1, '#3c4668', 7);
    s += t(581, cy(i), rows[i], '#3c4668', 6.5);
    s += t(1013, cy(i), rows[i], '#3c4668', 6.5);
  }

  /* triangles first, so that round pins sit over them */
  var blue = '#6666ee', red = '#e8423a', pink = '#da6c9c', rose = '#e0604c', oran = '#e68a40', yel = '#cfc24a';
  for (r = 0; r < 28; r++) {
    for (c = 0; c < 28; c++) {
      var C = pins[r][c], x = cx(c), y = cy(r);
      if (C === '^') s += up(x, y, t(x, y + 1, 'D', blue));
      else if (C === 'A') s += up(x, y, t(x, y + 1, 'A', blue));
      else if (C === 'a') s += down(x, y, t(x, y - 1, 'A', blue));
      else if (C === 'u') s += up(x, y);
      else if (C === 'v') s += down(x, y);
      else if (C === 'I') s += up(x, y, bar(x, y + 1));
      else if (C === '#') s += grey(x, y);
    }
  }
  for (r = 0; r < 28; r++) {
    for (c = 0; c < 28; c++) {
      var D = pins[r][c], x2 = cx(c), y2 = cy(r);
      if (D === '_' || '^Aauv I#'.indexOf(D) >= 0) continue;
      if (D === '[') s += square(x2, y2, 1);
      else if (D === ']') s += square(x2, y2, 2);
      else if (D === 'Z') {
        s += '<rect x="' + (x2 - 6) + '" y="' + (y2 - 6) + '" width="12" height="12" fill="#7a0a0a" stroke="#777" stroke-width="1.6"/><path d="M' + (x2 - 4) + ' ' + (y2 + 3.5) + 'h4v-7h3" fill="none" stroke="#e6b0a8"/>';
      }
      else if (D === 'o') s += circle(x2, y2);
      else if (D === 'n') s += hex(x2, y2) + t(x2, y2, 'n', pink);
      else if (D === 'p') s += hex(x2, y2) + t(x2, y2, 'p', rose);
      else if (D === 'N') s += hex(x2, y2, '#7a0505') + t(x2, y2, 'n', '#eeb0b0');
      else if (D === 'P') s += hex(x2, y2, '#7a0505') + t(x2, y2, 'p', '#eeb0b0');
      else if (D === 'R') s += circle(x2, y2, '#7a0505') + t(x2, y2, 'Q', '#eeb0b0');
      else if (D === '@') s += circle(x2, y2, '#7a0505');
      else if (D === '(') s += circle(x2, y2) + t(x2, y2, 'R', oran);
      else if (D === ')') s += circle(x2, y2) + t(x2, y2, 'E', oran);
      else if (yellow[D]) s += dia(x2, y2) + t(x2, y2, yellow[D], yel);
      else s += circle(x2, y2) + t(x2, y2, D, D === 'D' ? oran : red);
    }
  }

  /* I/O bank boxes */
  var boxes = [
    [700, 117, 46, 15, '#fbf8c0', 'IOBANK_4'], [849, 117, 46, 15, '#dcf6c4', 'IOBANK_5'],
    [530, 281, 45, 15, '#d8f4f4', 'IOBANK_3'], [1021, 281, 45, 15, '#f4e0cc', 'IOBANK_6'],
    [530, 430, 45, 15, '#e8efe6', 'IOBANK_2'], [1021, 430, 45, 15, '#e0e0c8', 'IOBANK_7'],
    [701, 579, 45, 15, '#fbdfdf', 'IOBANK_1'], [849, 579, 46, 15, '#f6c8f6', 'IOBANK_8']
  ];
  boxes.forEach(function (b) {
    var mx = b[0] + b[2] / 2;
    s += '<rect x="' + b[0] + '" y="' + b[1] + '" width="' + b[2] + '" height="' + b[3] + '" fill="' + b[4] + '" stroke="#a8a8a8" stroke-width="1"/>';
    s += '<text x="' + mx + '" y="' + (b[1] + 6) + '" font-size="3" fill="#555" text-anchor="middle" font-family="Liberation Sans, sans-serif">' + b[5] + '</text>';
    s += '<text x="' + mx + '" y="' + (b[1] + 11) + '" font-size="3" fill="#555" text-anchor="middle" font-family="Liberation Sans, sans-serif">(n assigned / n assignable)</text>';
  });

  document.getElementById('pkg').innerHTML = s;
})();
```
